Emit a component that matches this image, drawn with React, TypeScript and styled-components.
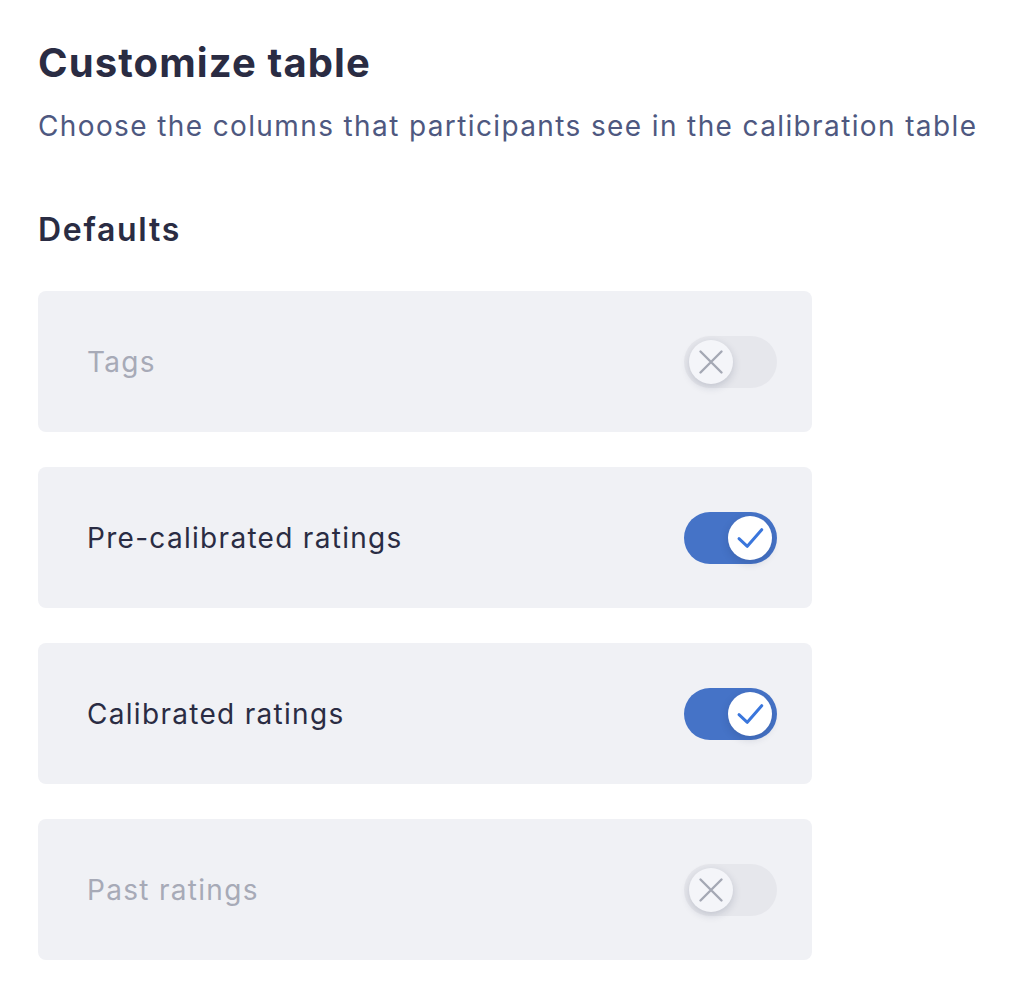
import React from "react";
import styled, { createGlobalStyle } from "styled-components";

const Global = createGlobalStyle`
  html, body { margin: 0; padding: 0; background: #ffffff; }
  body { font-family: Inter, "Noto Sans", sans-serif; -webkit-font-smoothing: antialiased; }
`;

const Page = styled.main`
  padding: 39px 0 0 38px;
  width: 774px;
`;

const Title = styled.h1`
  margin: 0;
  font-size: 40px;
  line-height: 48px;
  font-weight: 700;
  color: #2a2c43;
  letter-spacing: 1.1px;
`;

const Subtitle = styled.p`
  margin: 21px 0 0;
  font-size: 28px;
  line-height: 36px;
  font-weight: 400;
  color: #4e5880;
  white-space: nowrap;
  letter-spacing: 1.38px;
`;

const Section = styled.h2`
  margin: 66px 0 0;
  font-size: 32px;
  line-height: 40px;
  font-weight: 600;
  color: #2a2c43;
  letter-spacing: 1.7px;
`;

const List = styled.div`
  margin-top: 41px;
  display: flex;
  flex-direction: column;
  gap: 35px;
`;

const Card = styled.div`
  height: 141px;
  box-sizing: border-box;
  background: #f0f1f5;
  border-radius: 8px;
  padding: 0 35px 0 49px;
  display: flex;
  align-items: center;
  justify-content: space-between;
`;

const Label = styled.span<{ $on: boolean }>`
  font-size: 28px;
  line-height: 36px;
  letter-spacing: 1.3px;
  color: ${(p) => (p.$on ? "#2a2c43" : "#a7aab7")};
`;

const Track = styled.div<{ $on: boolean }>`
  width: 93px;
  height: 52px;
  border-radius: 26px;
  box-sizing: border-box;
  padding: 4px 5px 4px 5px;
  background: ${(p) => (p.$on ? "#4573c7" : "#e6e7ec")};
  display: flex;
  justify-content: ${(p) => (p.$on ? "flex-end" : "flex-start")};
  align-items: center;
`;

const Knob = styled.div<{ $on: boolean }>`
  width: 44px;
  height: 44px;
  border-radius: 50%;
  background: ${(p) => (p.$on ? "#ffffff" : "#f4f5f9")};
  box-shadow: 0 3px 8px rgba(30, 40, 70, 0.18);
  display: flex;
  align-items: center;
  justify-content: center;
`;

const Toggle = ({ on }: { on: boolean }) => (
  <Track $on={on}>
    <Knob $on={on}>
      {on ? (
        <svg width="30" height="30" viewBox="0 0 30 30" fill="none">
          <path d="M4 15.7 L12.3 23.3 L26.7 6.7" stroke="#3a76dc" strokeWidth="3" strokeLinecap="round" strokeLinejoin="round" />
        </svg>
      ) : (
        <svg width="26" height="26" viewBox="0 0 26 26" fill="none">
          <path d="M2.5 2.5 L23.5 23.5 M23.5 2.5 L2.5 23.5" stroke="#a4a8b4" strokeWidth="2.4" strokeLinecap="round" />
        </svg>
      )}
    </Knob>
  </Track>
);

const rows = [
  { label: "Tags", on: false },
  { label: "Pre-calibrated ratings", on: true },
  { label: "Calibrated ratings", on: true },
  { label: "Past ratings", on: false },
];

export default function App() {
  return (
    <>
      <Global />
      <Page>
        <Title>Customize table</Title>
        <Subtitle>Choose the columns that participants see in the calibration table</Subtitle>
        <Section>Defaults</Section>
        <List>
          {rows.map((r) => (
            <Card key={r.label}>
              <Label $on={r.on}>{r.label}</Label>
              <Toggle on={r.on} />
            </Card>
          ))}
        </List>
      </Page>
    </>
  );
}
